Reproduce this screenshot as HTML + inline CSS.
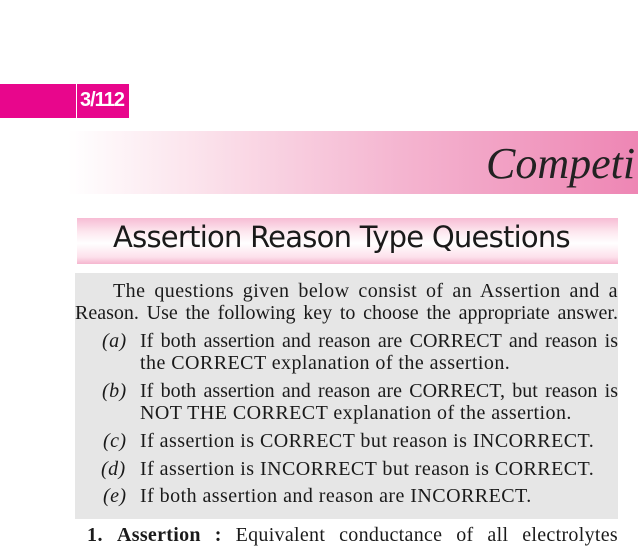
<!DOCTYPE html>
<html><head><meta charset="utf-8"><style>
body{margin:0;width:638px;height:547px;background:#fff;position:relative;overflow:hidden;font-family:"Liberation Serif",serif;color:#1a1a1a}
.a{position:absolute}
.l{position:absolute;font-size:20px;white-space:nowrap;line-height:22px;letter-spacing:0.45px}
.j{text-align:justify;text-align-last:justify;white-space:normal}
</style></head><body>
<div class="a" style="left:0;top:84px;width:129px;height:34px;background:#e8068c"></div>
<div class="a" style="left:76px;top:84px;width:1px;height:34px;background:#fff"></div>
<div class="a" style="left:80px;top:89px;font:bold 20px 'Liberation Sans',sans-serif;color:#fff;letter-spacing:-1px">3/112</div>
<div class="a" style="left:68px;top:131px;width:570px;height:63px;background:linear-gradient(90deg,#fff 0%,#fbe0ea 25%,#f4b3cf 60%,#ee86b4 100%)"></div>
<div class="a" style="left:486px;top:138px;font:italic 44px 'Liberation Serif',serif;color:#222;white-space:nowrap">Competi</div>
<div class="a" style="left:77px;top:218px;width:541px;height:46px;background:linear-gradient(180deg,#f7bcd4 0%,#fde7ef 30%,#fff 55%,#fde0eb 85%,#f5b6cf 100%)"></div>
<div class="a" style="left:113px;top:220px;font:29px 'DejaVu Sans','Liberation Sans',sans-serif;color:#1a1a1a;white-space:nowrap;letter-spacing:-0.75px">Assertion Reason Type Questions</div>
<div class="a" style="left:75px;top:273px;width:543px;height:246px;background:#e6e6e6"></div>
<div class="l j" style="left:113px;top:280px;width:505px">The questions given below consist of an Assertion and a</div>
<div class="l j" style="left:75px;top:302px;width:543px;letter-spacing:0">Reason. Use the following key to choose the appropriate answer.</div>
<div class="l" style="left:102px;top:330px"><i>(a)</i></div>
<div class="l j" style="left:140px;top:330px;width:478px;letter-spacing:0">If both assertion and reason are CORRECT and reason is</div>
<div class="l" style="left:140px;top:352px">the CORRECT explanation of the assertion.</div>
<div class="l" style="left:102px;top:380px"><i>(b)</i></div>
<div class="l j" style="left:140px;top:380px;width:478px;letter-spacing:0">If both assertion and reason are CORRECT, but reason is</div>
<div class="l" style="left:140px;top:402px">NOT THE CORRECT explanation of the assertion.</div>
<div class="l" style="left:103px;top:430px"><i>(c)</i></div>
<div class="l" style="left:140px;top:430px">If assertion is CORRECT but reason is INCORRECT.</div>
<div class="l" style="left:101px;top:458px"><i>(d)</i></div>
<div class="l" style="left:140px;top:458px">If assertion is INCORRECT but reason is CORRECT.</div>
<div class="l" style="left:103px;top:485px"><i>(e)</i></div>
<div class="l" style="left:140px;top:485px">If both assertion and reason are INCORRECT.</div>
<div class="l" style="left:87px;top:524px"><b>1.</b></div>
<div class="l j" style="left:117px;top:524px;width:501px;letter-spacing:0.3px"><b>Assertion&nbsp;:</b> Equivalent conductance of all electrolytes</div>
</body></html>
